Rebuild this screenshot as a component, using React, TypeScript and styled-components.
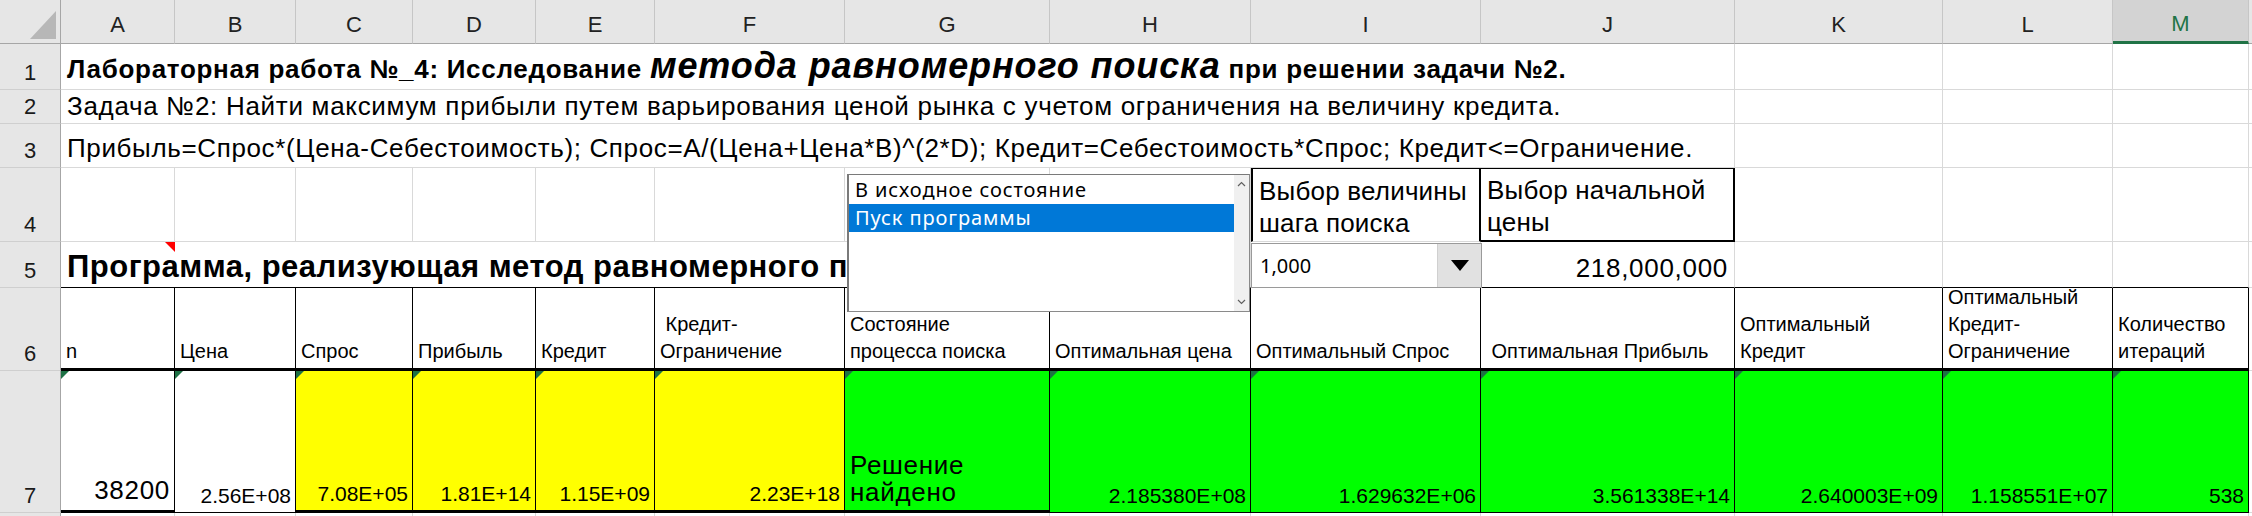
import React from 'react';
import styled, { createGlobalStyle, css } from 'styled-components';

const GlobalStyle = createGlobalStyle`
  html, body {
    margin: 0;
    padding: 0;
    background: #ffffff;
  }
  body {
    font-family: "Liberation Sans", Arial, sans-serif;
    color: #000;
    overflow: hidden;
  }
  * {
    box-sizing: border-box;
  }
`;

// column widths: row header, A..M, N (clipped)
const COLS = [61, 114, 121, 117, 123, 119, 190, 205, 201, 230, 254, 208, 170, 136, 60];
// row heights: column header, 1..7, 8 (clipped)
const ROWS = [44, 46, 34, 44, 74, 46, 83, 142, 40];

const GRID = '#d9d9d9';

const Sheet = styled.div`
  position: relative;
  width: 2252px;
  height: 516px;
  overflow: hidden;
  display: grid;
  grid-template-columns: ${COLS.map((c) => `${c}px`).join(' ')};
  grid-template-rows: ${ROWS.map((r) => `${r}px`).join(' ')};
`;

const Corner = styled.div`
  position: relative;
  background: #e6e6e6;
  border-right: 1px solid #a6a6a6;
  border-bottom: 1px solid #a6a6a6;

  &::after {
    content: '';
    position: absolute;
    right: 4px;
    bottom: 4px;
    width: 0;
    height: 0;
    border-left: 26px solid transparent;
    border-bottom: 28px solid #b7b7b7;
  }
`;

const ColHead = styled.div<{ $active?: boolean }>`
  display: flex;
  align-items: center;
  justify-content: center;
  padding-top: 6px;
  font-size: 22px;
  color: #222;
  background: #e6e6e6;
  border-right: 1px solid #c6c6c6;
  border-bottom: 1px solid #a6a6a6;

  ${(p) =>
    p.$active &&
    css`
      background: #d3d3d3;
      color: #217346;
      border-bottom: 3px solid #217346;
    `}
`;

const RowHead = styled.div`
  display: flex;
  align-items: flex-end;
  justify-content: center;
  padding-bottom: 3px;
  font-size: 22px;
  line-height: 26px;
  color: #1a1a1a;
  background: #e6e6e6;
  border-right: 1px solid #a6a6a6;
  border-bottom: 1px solid #cfcfcf;
`;

const Cell = styled.div<{ $span?: number; $bottom?: string }>`
  position: relative;
  grid-column: span ${(p) => p.$span ?? 1};
  border-right: 1px solid ${GRID};
  border-bottom: 1px solid ${(p) => p.$bottom ?? GRID};
`;

const TextCell = styled(Cell)<{ $size?: number; $pb?: number; $ls?: number }>`
  display: flex;
  align-items: flex-end;
  padding: 0 5px ${(p) => p.$pb ?? 3}px 6px;
  font-size: ${(p) => p.$size ?? 26}px;
  letter-spacing: ${(p) => p.$ls ?? 0.7}px;
  line-height: 1.15;
  white-space: nowrap;
  overflow: hidden;
`;

const Bold = styled.span`
  font-weight: bold;
  font-size: 26px;
  letter-spacing: 0.7px;
`;

const BigItalic = styled.span`
  font-weight: bold;
  font-style: italic;
  font-size: 36px;
  letter-spacing: 0.9px;
`;

const CommentMark = styled.span`
  position: absolute;
  top: 0;
  width: 0;
  height: 0;
  border-left: 10px solid transparent;
  border-top: 10px solid #ff0000;
`;

const LabelBox = styled.div<{ $last?: boolean }>`
  display: flex;
  align-items: flex-end;
  padding: 0 4px 2px 6px;
  font-size: 26px;
  letter-spacing: 0.2px;
  line-height: 32px;
  white-space: nowrap;
  border-top: 2px solid #000;
  border-left: ${(p) => (p.$last ? 'none' : '2px solid #000')};
  border-right: 2px solid #000;
  border-bottom: ${(p) => (p.$last ? '2px solid #000' : `1px solid ${GRID}`)};
  margin-top: -1px;
`;

const NumberCell = styled(Cell)`
  display: flex;
  align-items: flex-end;
  justify-content: flex-end;
  padding: 0 6px 3px 4px;
  font-size: 26px;
  letter-spacing: 0.7px;
  line-height: 1.15;
`;

const HeadCell = styled.div`
  display: flex;
  align-items: flex-end;
  padding: 0 4px 3px 5px;
  font-size: 20px;
  line-height: 27px;
  white-space: nowrap;
  overflow: hidden;
  border-right: 1px solid #000;
  border-top: 1px solid #000;
  border-bottom: 3px solid #000;
  margin-top: -1px;
`;

const ValueCell = styled.div<{ $fill?: string; $left?: boolean; $size?: number; $thick?: boolean }>`
  position: relative;
  display: flex;
  align-items: flex-end;
  justify-content: ${(p) => (p.$left ? 'flex-start' : 'flex-end')};
  padding: 0 4px 4px 5px;
  font-size: ${(p) => p.$size ?? 21}px;
  letter-spacing: ${(p) => (p.$size ? '0.7px' : '0')};
  line-height: ${(p) => (p.$left ? '27px' : '1.15')};
  white-space: nowrap;
  background: ${(p) => p.$fill ?? '#ffffff'};
  border-right: 1px solid #000;
  border-bottom: ${(p) => (p.$thick ? '3px solid #000' : '1px solid #000')};

  &::before {
    content: '';
    position: absolute;
    top: 0;
    left: 0;
    width: 0;
    height: 0;
    border-top: 8px solid #1e7145;
    border-right: 8px solid transparent;
  }
`;

/* ---- form controls lying over the sheet ---- */

const ListBox = styled.div`
  position: absolute;
  left: 847px;
  top: 174px;
  width: 403px;
  height: 138px;
  display: flex;
  background: #ffffff;
  border: 1px solid #8a8a8a;
  border-top-color: #7a7a7a;
  border-left: 2px solid #7a7a7a;
  font-family: "Noto Sans", "Open Sans", sans-serif;
  font-size: 20px;
  letter-spacing: 0.9px;
  z-index: 5;
`;

const ListItems = styled.div`
  flex: 1;
  padding-top: 1px;
`;

const ListItem = styled.div<{ $selected?: boolean }>`
  height: 28px;
  line-height: 27px;
  padding-left: 6px;
  white-space: nowrap;
  color: ${(p) => (p.$selected ? '#ffffff' : '#000000')};
  background: ${(p) => (p.$selected ? '#0078d7' : 'transparent')};
`;

const ScrollBar = styled.div`
  width: 15px;
  display: flex;
  flex-direction: column;
  justify-content: space-between;
  align-items: center;
  padding: 6px 0 6px;
  background: #f0f0f0;
`;

const ComboBox = styled.div`
  position: absolute;
  left: 1251px;
  top: 243px;
  width: 231px;
  height: 45px;
  display: flex;
  background: #ffffff;
  border: 1px solid #9a9a9a;
  font-family: "Noto Sans", "Open Sans", sans-serif;
  font-size: 20px;
  z-index: 5;
`;

const ComboValue = styled.div`
  flex: 1;
  display: flex;
  align-items: center;
  padding-left: 8px;
`;

const ComboButton = styled.div`
  width: 44px;
  display: flex;
  align-items: center;
  justify-content: center;
  background: #e1e1e1;
  border-left: 1px solid #d0d0d0;
`;

const Chevron = ({ up }: { up?: boolean }) => (
  <svg width="9" height="6" viewBox="0 0 9 6">
    <path
      d={up ? 'M1 5 L4.5 1.5 L8 5' : 'M1 1 L4.5 4.5 L8 1'}
      fill="none"
      stroke="#606060"
      strokeWidth="1.2"
    />
  </svg>
);

const DownTriangle = () => (
  <svg width="18" height="11" viewBox="0 0 18 11">
    <path d="M0 0 H18 L9 11 Z" fill="#000" />
  </svg>
);

const LETTERS = ['A', 'B', 'C', 'D', 'E', 'F', 'G', 'H', 'I', 'J', 'K', 'L', 'M', ''];

const headers: React.ReactNode[] = [
  'n',
  'Цена',
  'Спрос',
  'Прибыль',
  'Кредит',
  <>
    &nbsp;Кредит-
    <br />
    Ограничение
  </>,
  <>
    Состояние
    <br />
    процесса поиска
  </>,
  'Оптимальная цена',
  'Оптимальный Спрос',
  '\u00a0Оптимальная Прибыль',
  <>
    Оптимальный
    <br />
    Кредит
  </>,
  <>
    Оптимальный
    <br />
    Кредит-
    <br />
    Ограничение
  </>,
  <>
    Количество
    <br />
    итераций
  </>,
];

type Value = { text: React.ReactNode; fill?: string; left?: boolean; size?: number; thick?: boolean };

const YELLOW = '#ffff00';
const GREEN = '#00ff00';

const values: Value[] = [
  { text: '38200', size: 26, thick: true },
  { text: '2.56E+08' },
  { text: '7.08E+05', fill: YELLOW, thick: true },
  { text: '1.81E+14', fill: YELLOW, thick: true },
  { text: '1.15E+09', fill: YELLOW, thick: true },
  { text: '2.23E+18', fill: YELLOW, thick: true },
  {
    text: (
      <span>
        Решение
        <br />
        найдено
      </span>
    ),
    fill: GREEN,
    left: true,
    size: 26,
    thick: true,
  },
  { text: '2.185380E+08', fill: GREEN },
  { text: '1.629632E+06', fill: GREEN },
  { text: '3.561338E+14', fill: GREEN },
  { text: '2.640003E+09', fill: GREEN },
  { text: '1.158551E+07', fill: GREEN },
  { text: '538', fill: GREEN },
];

const blanks = (n: number, bottom?: string) =>
  Array.from({ length: n }, (_, i) => <Cell key={`b${i}`} $bottom={bottom} />);

const App: React.FC = () => {
  return (
    <>
      <GlobalStyle />
      <Sheet>
        {/* column header row */}
        <Corner />
        {LETTERS.map((l, i) => (
          <ColHead key={i} $active={l === 'M'}>
            {l}
          </ColHead>
        ))}

        {/* row 1 */}
        <RowHead>1</RowHead>
        <TextCell $span={10} $pb={3}>
          <span>
            <Bold>Лабораторная работа №_4: Исследование </Bold>
            <BigItalic>метода равномерного поиска</BigItalic>
            <Bold> при решении задачи №2.</Bold>
          </span>
        </TextCell>
        {blanks(4)}

        {/* row 2 */}
        <RowHead>2</RowHead>
        <TextCell $span={10} $pb={1}>
          Задача №2: Найти максимум прибыли путем варьирования ценой рынка с учетом ограничения на величину кредита.
        </TextCell>
        {blanks(4)}

        {/* row 3 */}
        <RowHead>3</RowHead>
        <TextCell $span={10} $pb={3} $ls={0.64}>
          Прибыль=Спрос*(Цена-Себестоимость); Спрос=A/(Цена+Цена*B)^(2*D); Кредит=Себестоимость*Спрос; Кредит&lt;=Ограничение.
        </TextCell>
        {blanks(4)}

        {/* row 4 */}
        <RowHead>4</RowHead>
        {blanks(8)}
        <LabelBox>
          Выбор величины
          <br />
          шага поиска
        </LabelBox>
        <LabelBox $last>
          Выбор начальной
          <br />
          цены
        </LabelBox>
        {blanks(4)}

        {/* row 5 */}
        <RowHead>5</RowHead>
        <TextCell $span={8} $size={31} $ls={0.5} $pb={2} $bottom="#000">
          <b>Программа, реализующая метод равномерного поиска</b>
          <CommentMark style={{ left: 104 }} />
        </TextCell>
        <Cell $bottom="#000" />
        <NumberCell $bottom="#000">218,000,000</NumberCell>
        {blanks(3, '#000')}
        <Cell />

        {/* row 6 */}
        <RowHead>6</RowHead>
        {headers.map((h, i) => (
          <HeadCell key={i}>{h}</HeadCell>
        ))}
        <Cell />

        {/* row 7 */}
        <RowHead>7</RowHead>
        {values.map((v, i) => (
          <ValueCell key={i} $fill={v.fill} $left={v.left} $size={v.size} $thick={v.thick}>
            {v.text}
          </ValueCell>
        ))}
        <Cell />

        {/* row 8, only its top edge is in view */}
        <RowHead />
        {blanks(14)}

        <ListBox>
          <ListItems>
            <ListItem>В исходное состояние</ListItem>
            <ListItem $selected>Пуск программы</ListItem>
          </ListItems>
          <ScrollBar>
            <Chevron up />
            <Chevron />
          </ScrollBar>
        </ListBox>

        <ComboBox>
          <ComboValue>1,000</ComboValue>
          <ComboButton>
            <DownTriangle />
          </ComboButton>
        </ComboBox>
      </Sheet>
    </>
  );
};

export default App;
